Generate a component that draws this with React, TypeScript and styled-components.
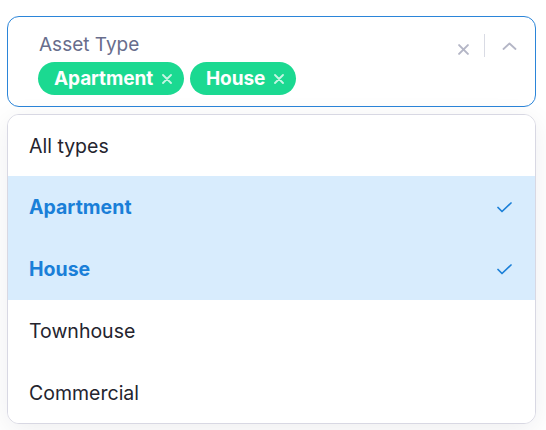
import React from "react";
import styled, { createGlobalStyle } from "styled-components";

const Global = createGlobalStyle`
  html, body { margin: 0; padding: 0; background: #ffffff; }
  body { font-family: Inter, "Noto Sans", sans-serif; -webkit-font-smoothing: antialiased; }
`;

const Page = styled.div`
  width: 546px;
  height: 430px;
  box-sizing: border-box;
  padding: 16px 10px 0 7px;
  display: flex;
  flex-direction: column;
  gap: 7px;
  overflow: hidden;
`;

const Control = styled.div`
  box-sizing: border-box;
  height: 91px;
  border: 1px solid #2b85d9;
  border-radius: 12px;
  background: #ffffff;
  display: flex;
  align-items: flex-start;
  padding: 16px 18px 0 30px;
`;

const ValueArea = styled.div`
  flex: 1;
  display: flex;
  flex-direction: column;
  gap: 6px;
`;

const Label = styled.div`
  font-size: 19px;
  line-height: 23px;
  color: #686d8c;
  margin-left: 1px;
`;

const Chips = styled.div`
  display: flex;
  gap: 6px;
`;

const Chip = styled.div`
  height: 33px;
  box-sizing: border-box;
  border-radius: 17px;
  background: #1bd991;
  color: #ffffff;
  display: flex;
  align-items: center;
  gap: 9px;
  padding: 0 12px 0 16px;
  font-size: 19px;
  font-weight: 700;
  letter-spacing: -0.1px;
`;

const Indicators = styled.div`
  display: flex;
  align-items: flex-start;
  padding-top: 1px;
`;

const ClearIcon = styled.svg`
  margin-top: 10px;
  margin-right: 15px;
`;

const Separator = styled.div`
  width: 1px;
  height: 23px;
  background: #d9dbe4;
  margin-right: 17px;
`;

const Chevron = styled.svg`
  margin-top: 8px;
`;

const Menu = styled.div`
  box-sizing: border-box;
  width: 529px;
  height: 310px;
  border: 1px solid #d8d8e3;
  border-radius: 12px;
  background: #ffffff;
  box-shadow: 0 6px 28px rgba(20, 20, 40, 0.07);
  overflow: hidden;
  display: flex;
  flex-direction: column;
`;

const Item = styled.div<{ $selected?: boolean }>`
  height: 62px;
  flex: 0 0 62px;
  box-sizing: border-box;
  display: flex;
  align-items: center;
  justify-content: space-between;
  padding: 0 23px 0 21px;
  font-size: 19.5px;
  font-weight: ${(p) => (p.$selected ? 700 : 400)};
  color: ${(p) => (p.$selected ? "#1a7fd8" : "#24242e")};
  background: ${(p) => (p.$selected ? "#d8ecfd" : "#ffffff")};
`;

const Divider = styled.div`
  height: 1px;
  margin: -1px 14px 0 14px;
  background: #eef2f8;
  position: relative;
  z-index: 1;
`;

const SmallX = ({ size, color, w }: { size: number; color: string; w: number }) => (
  <svg width={size} height={size} viewBox="0 0 10 10">
    <path d="M1 1 L9 9 M9 1 L1 9" stroke={color} strokeWidth={w} strokeLinecap="round" />
  </svg>
);

const Check = () => (
  <svg width="15" height="11" viewBox="0 0 15 11">
    <path d="M1 5.5 L5 9.5 L14 1" fill="none" stroke="#1a7fd8" strokeWidth="1.7" strokeLinecap="round" strokeLinejoin="round" />
  </svg>
);

const options = [
  { label: "All types", selected: false },
  { label: "Apartment", selected: true },
  { label: "House", selected: true },
  { label: "Townhouse", selected: false },
  { label: "Commercial", selected: false },
];

export default function App() {
  return (
    <>
      <Global />
      <Page>
        <Control>
          <ValueArea>
            <Label>Asset Type</Label>
            <Chips>
              {["Apartment", "House"].map((c) => (
                <Chip key={c}>
                  {c}
                  <SmallX size={10} color="rgba(255,255,255,0.75)" w={1.8} />
                </Chip>
              ))}
            </Chips>
          </ValueArea>
          <Indicators>
            <ClearIcon width="11" height="11" viewBox="0 0 10 10">
              <path d="M1 1 L9 9 M9 1 L1 9" stroke="#b4b6c6" strokeWidth="1.8" strokeLinecap="round" />
            </ClearIcon>
            <Separator />
            <Chevron width="15" height="8" viewBox="0 0 15 8">
              <path d="M1.5 7 L7.5 1.5 L13.5 7" fill="none" stroke="#b4b6c6" strokeWidth="1.8" strokeLinecap="round" strokeLinejoin="round" />
            </Chevron>
          </Indicators>
        </Control>
        <Menu>
          {options.map((o, i) => (
            <React.Fragment key={o.label}>
              {i === 1 && <Divider />}
              <Item $selected={o.selected}>
                <span>{o.label}</span>
                {o.selected && <Check />}
              </Item>
            </React.Fragment>
          ))}
        </Menu>
      </Page>
    </>
  );
}
